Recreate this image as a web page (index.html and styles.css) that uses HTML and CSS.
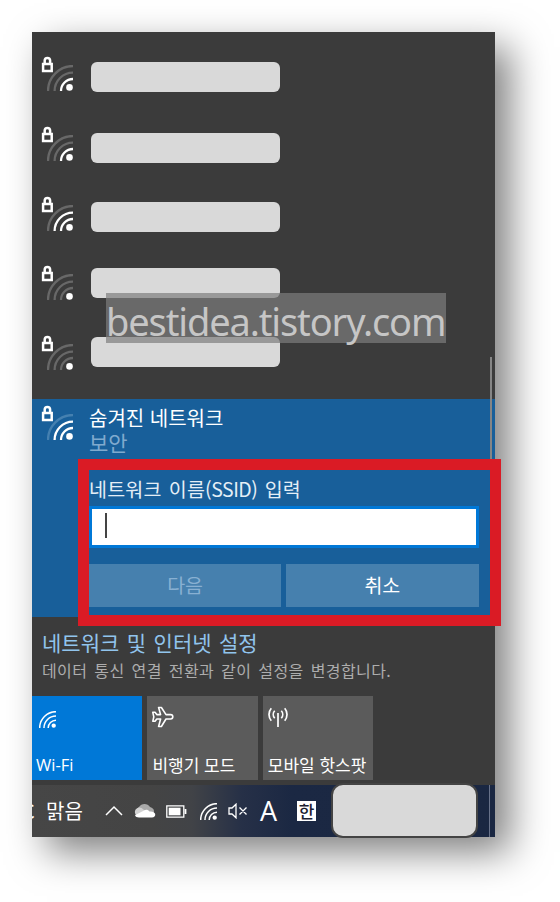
FILE: index.html
```html
<!DOCTYPE html>
<html lang="ko">
<head>
  <meta charset="UTF-8" />
  <meta name="viewport" content="width=device-width, initial-scale=1.0"/>
  <title>네트워크</title>
  <link rel="stylesheet" href="styles.css">
</head>
<body>
  <svg class="defs" width="0" height="0">
    <symbol id="lock" viewBox="0 0 14 18">
      <path d="M4.700 7V4.600a2.700 2.700 0 0 1 5.400 0V7M3.100 8.100h8.600v6.800H3.100z" fill="none" stroke="#fff" stroke-width="2.5"/>
    </symbol>
    <symbol id="wifi" viewBox="0 0 26 26">
      <path class="arc arc3" d="M1 26A25 25 0 0 1 26 1"/>
      <path class="arc arc2" d="M7.6 26A18.4 18.4 0 0 1 26 7.6"/>
      <path class="arc arc1" d="M14 26A12 12 0 0 1 26 14"/>
      <circle cx="22.5" cy="22.4" r="3.3" fill="#fff"/>
    </symbol>
  </svg>

  <div class="panel">
    <div class="network-list">
      <div class="network level-1">
        <div class="signal"><svg class="wifi"><use href="#wifi"/></svg><svg class="lock"><use href="#lock"/></svg></div>
        <div class="name-bar"></div>
      </div>
      <div class="network level-1">
        <div class="signal"><svg class="wifi"><use href="#wifi"/></svg><svg class="lock"><use href="#lock"/></svg></div>
        <div class="name-bar low"></div>
      </div>
      <div class="network level-2 short">
        <div class="signal"><svg class="wifi"><use href="#wifi"/></svg><svg class="lock"><use href="#lock"/></svg></div>
        <div class="name-bar"></div>
      </div>
      <div class="network level-0">
        <div class="signal"><svg class="wifi"><use href="#wifi"/></svg><svg class="lock"><use href="#lock"/></svg></div>
        <div class="name-bar high"></div>
      </div>
      <div class="network level-0">
        <div class="signal"><svg class="wifi"><use href="#wifi"/></svg><svg class="lock"><use href="#lock"/></svg></div>
        <div class="name-bar higher"></div>
      </div>
      <div class="watermark">bestidea.tistory.com</div>
    </div>

    <div class="selected level-2">
      <div class="signal"><svg class="wifi"><use href="#wifi"/></svg><svg class="lock"><use href="#lock"/></svg></div>
      <div class="details">
        <div class="title">숨겨진 네트워크</div>
        <div class="security">보안</div>
        <div class="form">
          <div class="label">네트워크 이름<span class="ssid">(SSID)</span> 입력</div>
          <div class="field"><span class="caret"></span></div>
          <div class="buttons">
            <div class="button disabled">다음</div>
            <div class="button">취소</div>
          </div>
        </div>
      </div>
      <div class="scrollbar"></div>
      <div class="highlight"></div>
    </div>

    <div class="settings">
      <div class="settings-link">네트워크 및 인터넷 설정</div>
      <div class="settings-text">데이터 통신 연결 전환과 같이 설정을 변경합니다.</div>
    </div>

    <div class="tiles">
      <div class="tile active">
        <svg class="tile-icon wifi-small" width="17" height="17"><use href="#wifi"/></svg>
        <span class="tile-name wifi-name">Wi-Fi</span>
      </div>
      <div class="tile">
        <svg class="tile-icon" width="24" height="24" viewBox="0 0 24 24" fill="none" stroke="#fff" stroke-width="1.6" stroke-linejoin="round">
          <path d="M6.600 1.500H9.400L14 8.600h4.600a2.100 2.100 0 0 1 0 4.400H14L9.400 20.500H6.600l2-7.500H4.800L3 15.300H.8l1-4.500L.8 6.300H3l1.800 2.300h3.800z"/>
        </svg>
        <span class="tile-name">비행기 모드</span>
      </div>
      <div class="tile">
        <svg class="tile-icon" width="24" height="24" viewBox="0 0 24 24" fill="none" stroke="#fff" stroke-width="1.7">
          <path d="M10 7v14M3.300 2.300a9.500 9.500 0 0 0 0 12.400M16.700 2.300a9.500 9.500 0 0 1 0 12.400M6.700 4.800a5.500 5.500 0 0 0 0 7.400M13.300 4.800a5.500 5.500 0 0 1 0 7.400"/>
        </svg>
        <span class="tile-name">모바일 핫스팟</span>
      </div>
    </div>

    <div class="taskbar">
      <div class="weather"><span class="degree">C</span><span>맑음</span></div>
      <svg class="chevron" width="18" height="12" viewBox="0 0 18 12"><path d="M1 10L9 2l8 8" fill="none" stroke="#fff" stroke-width="1.5"/></svg>
      <svg class="cloud" width="22" height="16" viewBox="0 0 22 16">
        <path d="M5 13a5 5 0 0 1 0-9 6.500 6.500 0 0 1 11 0c4 1 5 4 3 8z" fill="#a9a9a9"/>
        <path d="M1 10c-.5-3 1.500-5 4-5.500 2 0 3 .8 4 1.800l5 3L5 14c-2-.3-3.500-2-4-4z" fill="#d2d2d2"/>
        <path d="M5 14.500c-2 0-3.500-1-4-2.300l9-4.700c1.500-1 4-1.200 5.500 1 3-.5 5 .7 5.700 2.500.3 2-1 3.500-3.200 3.500z" fill="#fff"/>
      </svg>
      <svg class="battery" width="21" height="13" viewBox="0 0 21 13"><path d="M.8.8h17v11.400H.8z" fill="none" stroke="#fff" stroke-width="1.3"/><path d="M2.700 2.700h11.800v7.600H2.700z" fill="#fff"/><path d="M19.500 4v5" stroke="#fff" stroke-width="1.8"/></svg>
      <svg class="wifi-small tray-wifi" width="17" height="17"><use href="#wifi"/></svg>
      <svg class="sound" width="20" height="16" viewBox="0 0 20 16"><path d="M1 5h3l4-3.800v13.600L4 11H1zM11.500 4.500l7 7M18.500 4.500l-7 7" fill="none" stroke="#fff" stroke-width="1.3"/></svg>
      <span class="ime-letter">A</span>
      <span class="ime-korean">한</span>
      <div class="clock"></div>
      <div class="desktop-line"></div>
    </div>
  </div>
</body>
</html>
```
FILE: styles.css
```css
:root {
  --off: #686868;
}

* {
  box-sizing: border-box;
}

body {
  margin: 0;
  padding: 32px;
  height: 902px;
  background: #fff;
  color: #fff;
  font-family: "Noto Sans CJK KR", sans-serif;
  overflow: hidden;
}

.defs {
  position: absolute;
}

.panel {
  width: 463px;
  height: 805px;
  background: #3b3b3b;
  box-shadow: 15px 15px 36px rgba(0, 0, 0, 0.5);
}

.network-list {
  position: relative;
  height: 367px;
  padding-top: 18px;
}

.network {
  display: flex;
  height: 70px;
}

.network.short {
  height: 69px;
}

.signal {
  position: relative;
  flex: none;
  width: 51px;
  height: 46px;
  margin-right: 8px;
  padding: 15px 0 0 15px;
}

.signal .wifi {
  display: block;
  width: 26px;
  height: 26px;
}

.signal .lock {
  position: absolute;
  left: 8px;
  top: 5.5px;
  width: 14px;
  height: 18px;
}

.arc {
  fill: none;
  stroke-width: 2.3;
}

.arc1 {
  stroke: var(--arc1, #fff);
}

.arc2 {
  stroke: var(--arc2, #fff);
}

.arc3 {
  stroke: var(--arc3, #fff);
}

.level-0 {
  --arc1: var(--off);
  --arc2: var(--off);
  --arc3: var(--off);
}

.level-1 {
  --arc2: var(--off);
  --arc3: var(--off);
}

.level-2 {
  --arc3: var(--off);
}

.name-bar {
  width: 189px;
  height: 30px;
  margin-top: 12px;
  border-radius: 6px;
  background: #d9d9d9;
}

.name-bar.low {
  margin-top: 13px;
}

.name-bar.high {
  margin-top: 9px;
}

.name-bar.higher {
  margin-top: 8px;
}

.watermark {
  position: absolute;
  left: 74px;
  top: 261px;
  width: 340px;
  height: 50px;
  background: rgba(126, 126, 126, 0.7);
  color: #c6c6c6;
  font: 38px/57px "Noto Sans", sans-serif;
  letter-spacing: -1.12px;
  white-space: nowrap;
}

.selected {
  --off: #4580b0;
  position: relative;
  display: flex;
  height: 218px;
  background: #185f9a;
}

.details {
  width: 389.5px;
  margin-left: -2px;
  padding-top: 6px;
}

.title,
.security {
  height: 25px;
  font-size: 20px;
  line-height: 26px;
}

.security {
  color: #80aace;
  font-size: 21px;
  line-height: 24px;
}

.form {
  padding-top: 21px;
}

.label {
  height: 30px;
  font-size: 19.5px;
  line-height: 26px;
  letter-spacing: 0.2px;
  word-spacing: 1.6px;
  color: #e4eef6;
}

.ssid {
  letter-spacing: -0.5px;
}

.field {
  height: 42px;
  padding: 4px 0 0 13px;
  border: 3px solid #0078d7;
  background: #fff;
}

.caret {
  display: block;
  width: 2px;
  height: 25px;
  background: #444;
}

.buttons {
  display: flex;
  gap: 5px;
  padding-top: 16px;
}

.button {
  flex: 1;
  height: 43px;
  background: #4680ae;
  font-size: 19.5px;
  line-height: 42px;
  text-align: center;
}

.button.disabled {
  color: #88b0d2;
}

.scrollbar {
  position: absolute;
  right: 3px;
  top: -42px;
  width: 2px;
  height: 103px;
  background: #858585;
}

.highlight {
  position: absolute;
  left: 46px;
  top: 60px;
  width: 423px;
  height: 167px;
  border: 11px solid #da1b25;
}

.settings {
  height: 79px;
  padding: 12px 0 0 10px;
  white-space: nowrap;
}

.settings-link {
  height: 28px;
  color: #91c4ed;
  font-size: 21px;
  line-height: 27px;
  word-spacing: 1.6px;
}

.settings-text {
  color: #adadad;
  font-size: 16px;
  line-height: 26px;
  letter-spacing: 0.4px;
  word-spacing: 2.1px;
}

.tiles {
  display: flex;
  gap: 5.2px;
  height: 89px;
}

.tile {
  display: flex;
  flex-direction: column;
  justify-content: space-between;
  width: 110.2px;
  height: 84px;
  padding: 10px 0 2px 5px;
  background: #5b5b5b;
  font-size: 17px;
  line-height: 26px;
  white-space: nowrap;
}

.tile.active {
  background: #0078d7;
}

.tile .wifi-small {
  margin: 5px 0 0 2px;
}

.wifi-name {
  font-family: "Open Sans", sans-serif;
  font-size: 16.5px;
  margin-left: -1px;
}

.taskbar {
  display: flex;
  align-items: center;
  height: 52px;
  background: linear-gradient(90deg, #464646 0, #444 120px, #414347 160px, #263047 210px, #1b2843 260px, #1a2742 100%);
}

.weather {
  display: flex;
  width: 73px;
  font-size: 20px;
  line-height: 30px;
}

.degree {
  width: 14px;
  overflow: hidden;
  text-indent: -10px;
}

.cloud {
  margin-left: 11px;
}

.battery {
  margin-left: 10px;
}

.tray-wifi {
  margin-left: 13px;
}

.sound {
  margin-left: 11px;
}

.ime-letter {
  width: 18px;
  margin-left: 12px;
  font: 27px/30px "Open Sans", sans-serif;
}

.ime-korean {
  width: 19px;
  height: 20px;
  margin-left: 19px;
  background: #fff;
  color: #1a2030;
  font-size: 17px;
  font-weight: 500;
  line-height: 19px;
  text-align: center;
}

.clock {
  width: 147px;
  height: 55px;
  margin: -2px 0 0 15px;
  border: 2px solid #444;
  border-radius: 12px;
  background: #d9d9d9;
}

.desktop-line {
  width: 1px;
  height: 52px;
  margin-left: 11px;
  background: #68728a;
}
```
